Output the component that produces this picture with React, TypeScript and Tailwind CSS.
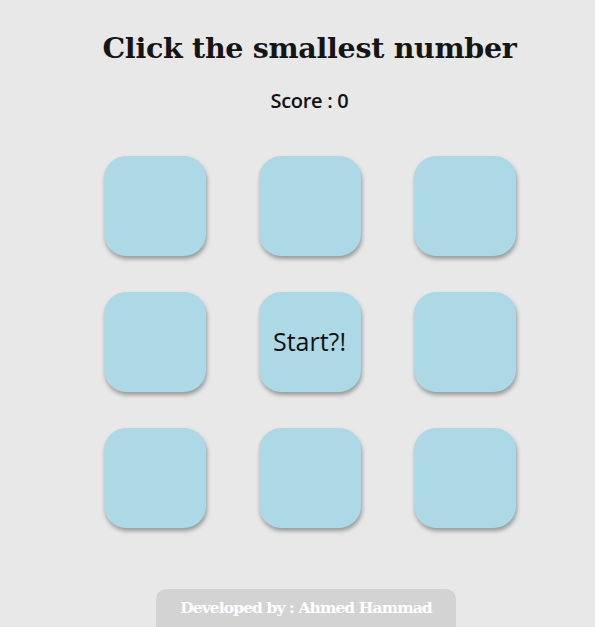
const tiles = ["", "", "", "", "Start?!", "", "", "", ""];

const App: React.FC = () => {
  return (
    <div className="min-h-[627px] bg-[#e8e8e8] pl-[24px] overflow-hidden">
      <div className="flex flex-col items-center pt-[29px]">
        <h1 className="font-['DejaVu_Serif',serif] text-[28.5px] font-bold leading-[38px] text-[#151515] tracking-[-0.3px]">
          Click the smallest number
        </h1>
        <p className="mt-[21px] font-['Open_Sans',sans-serif] text-[20px] font-semibold leading-[26px] text-[#111] tracking-[-0.3px]">
          Score : 0
        </p>
        <div className="mt-[42px] grid grid-cols-3 gap-x-[53px] gap-y-[36px]">
          {tiles.map((t, i) => (
            <div
              key={i}
              className="flex h-[100px] w-[102px] items-center justify-center rounded-[22px] bg-[#add8e6] shadow-[1px_3px_4px_rgba(0,0,0,0.35)] font-['Open_Sans',sans-serif] text-[25px] text-[#111]"
            >
              {t}
            </div>
          ))}
        </div>
      </div>
      <div className="ml-[132px] mt-[61px] flex h-[48px] w-[300px] justify-center rounded-t-[10px] bg-[#d3d3d3] pt-[9px]">
        <span className="font-['DejaVu_Serif',serif] text-[15.5px] font-bold leading-[20px] text-white tracking-[-0.9px]">
          Developed by : Ahmed Hammad
        </span>
      </div>
    </div>
  );
};

export default App;
